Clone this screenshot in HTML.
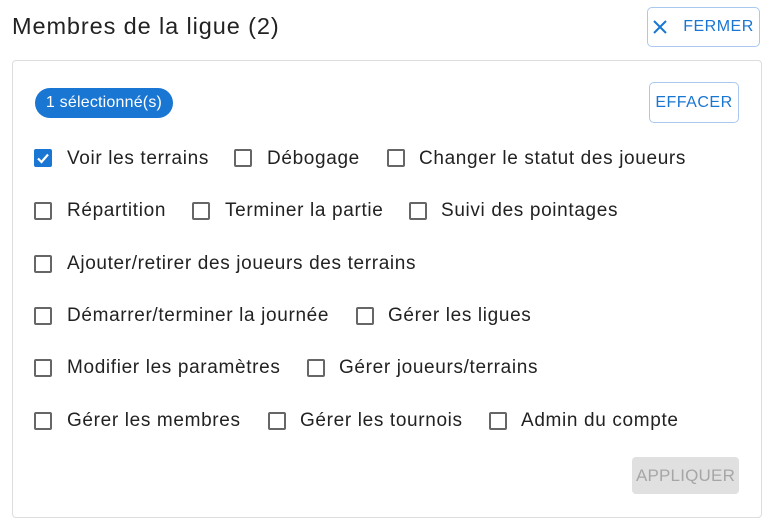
<!DOCTYPE html>
<html><head><meta charset="utf-8"><style>
body{margin:0;width:775px;height:527px;background:#fff;font-family:"Liberation Sans",Arial,sans-serif;position:relative;overflow:hidden;color:#222}
.a{position:absolute}
.t{position:absolute;font-size:19px;letter-spacing:.65px;color:#222;line-height:20px}
.cb{position:absolute;width:14px;height:14px;border:2px solid #666;border-radius:2px}
.btn{position:absolute;border:1px solid #a9c9f0;border-radius:5px;color:#1976d2;font-size:16px;box-sizing:border-box;display:flex;align-items:center;justify-content:center;letter-spacing:.5px}
</style></head><body>
<div class="a" style="left:12px;top:13px;font-size:23.5px;letter-spacing:.9px;color:#222">Membres de la ligue (2)</div>
<div class="btn" style="left:647px;top:7px;width:113px;height:40px"><svg width="14" height="14" viewBox="0 0 14 14" style="margin-right:16px"><path d="M1 1L13 13M13 1L1 13" stroke="#1976d2" stroke-width="2"/></svg>FERMER</div>
<div class="a" style="left:12px;top:60px;width:748px;height:456px;border:1px solid #ddd;border-radius:4px"></div>
<div class="a" style="left:35px;top:88px;width:138px;height:30px;border-radius:15px;background:#1976d2;color:#fff;font-size:16px;letter-spacing:.2px;line-height:30px;text-align:center">1 sélectionné(s)</div>
<div class="btn" style="left:649px;top:82px;width:90px;height:41px">EFFACER</div>
<div class="a" style="left:34px;top:149px;width:18px;height:18px;background:#1976d2;border-radius:2px"><svg width="18" height="18" viewBox="0 0 18 18"><path d="M4 9.5L7.5 13L14 5.5" stroke="#fff" stroke-width="2.2" fill="none"/></svg></div>
<div class="t" style="left:67px;top:149px">Voir les terrains</div>
<div class="cb" style="left:234px;top:149px"></div><div class="t" style="left:267px;top:149px">Débogage</div>
<div class="cb" style="left:387px;top:149px"></div><div class="t" style="left:419px;top:149px">Changer le statut des joueurs</div>

<div class="cb" style="left:34px;top:202px"></div><div class="t" style="left:67px;top:201px">Répartition</div>
<div class="cb" style="left:192px;top:202px"></div><div class="t" style="left:225px;top:201px">Terminer la partie</div>
<div class="cb" style="left:409px;top:202px"></div><div class="t" style="left:441px;top:201px">Suivi des pointages</div>

<div class="cb" style="left:34px;top:255px"></div><div class="t" style="left:67px;top:254px">Ajouter/retirer des joueurs des terrains</div>

<div class="cb" style="left:34px;top:307px"></div><div class="t" style="left:67px;top:306px">Démarrer/terminer la journée</div>
<div class="cb" style="left:356px;top:307px"></div><div class="t" style="left:388px;top:306px">Gérer les ligues</div>

<div class="cb" style="left:34px;top:359px"></div><div class="t" style="left:67px;top:358px">Modifier les paramètres</div>
<div class="cb" style="left:307px;top:359px"></div><div class="t" style="left:339px;top:358px">Gérer joueurs/terrains</div>

<div class="cb" style="left:34px;top:412px"></div><div class="t" style="left:67px;top:411px">Gérer les membres</div>
<div class="cb" style="left:268px;top:412px"></div><div class="t" style="left:300px;top:411px">Gérer les tournois</div>
<div class="cb" style="left:489px;top:412px"></div><div class="t" style="left:521px;top:411px">Admin du compte</div>

<div class="a" style="left:632px;top:457px;width:107px;height:37px;background:#e0e0e0;border-radius:4px;color:#a6a6a6;font-size:17px;letter-spacing:.2px;line-height:37px;text-align:center">APPLIQUER</div>
</body></html>
